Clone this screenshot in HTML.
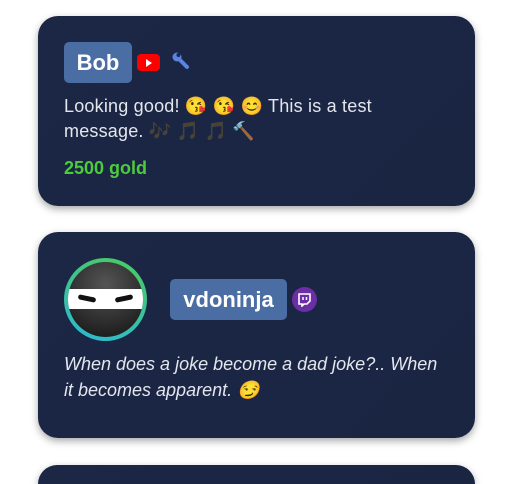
<!DOCTYPE html>
<html><head><style>
html,body{margin:0;background:#fff;width:507px;height:484px;overflow:hidden;font-family:"Liberation Sans",sans-serif;position:relative}
.card{position:absolute;left:38px;width:437px;background:linear-gradient(135deg,#1b2745,#1a2542);border-radius:20px;box-shadow:0 3px 8px rgba(0,0,0,.35)}
.badge{position:absolute;background:#4a6da3;color:#fff;font-weight:bold;font-size:22px;border-radius:5px;text-align:center}
.txt{position:absolute;color:#e4e6ee;font-size:18px;line-height:25px}
</style></head><body>
<div class="card" style="top:16px;height:190px">
 <div class="badge" style="left:26px;top:26px;width:68px;height:41px;line-height:41px">Bob</div>
 <div style="position:absolute;left:99px;top:38px;width:23px;height:17px;background:#f00;border-radius:4px"><div style="position:absolute;left:9px;top:4.5px;border-left:6px solid #fff;border-top:4px solid transparent;border-bottom:4px solid transparent"></div></div>
 <svg style="position:absolute;left:134px;top:36px" width="20" height="20" viewBox="0 0 20 20"><path d="M5 5 L15 15" stroke="#5b83e0" stroke-width="4" stroke-linecap="round"/><circle cx="5" cy="5" r="4.5" fill="#5b83e0"/><circle cx="6.5" cy="3" r="2" fill="#1b2745"/></svg>
 <div class="txt" style="left:26px;top:78px;width:330px;letter-spacing:0.2px">Looking good! 😘 😘 😊 This is a test message. <span style="filter:brightness(0.55) sepia(0.8)">🎶 🎵 🎵</span> 🔨</div>
 <div style="position:absolute;left:26px;top:142px;color:#4ccc3c;font-weight:bold;font-size:18px">2500 gold</div>
</div>
<div class="card" style="top:232px;height:206px">
 <div style="position:absolute;left:26px;top:26px;width:83px;height:83px;border-radius:50%;background:linear-gradient(20deg,#2ab8d8,#4ccc5c)"></div>
 <div style="position:absolute;left:30px;top:30px;width:75px;height:75px;border-radius:50%;background:radial-gradient(circle at 50% 30%,#555,#111);overflow:hidden">
  <div style="position:absolute;left:0;right:0;top:27px;height:20px;background:#fff"></div>
  <div style="position:absolute;left:10px;top:34px;width:18px;height:5px;background:#111;transform:rotate(12deg);border-radius:3px"></div>
  <div style="position:absolute;left:47px;top:34px;width:18px;height:5px;background:#111;transform:rotate(-12deg);border-radius:3px"></div>
 </div>
 <div class="badge" style="left:132px;top:47px;width:117px;height:41px;line-height:41px">vdoninja</div>
 <div style="position:absolute;left:254px;top:55px;width:25px;height:25px;border-radius:50%;background:#6b2fa5"><svg style="position:absolute;left:6px;top:6px" width="13" height="14" viewBox="0 0 13 14"><path d="M1 1 H12 V8 L9 11 H6 L4 13 V11 H1 Z" fill="none" stroke="#fff" stroke-width="1.6"/><path d="M5 4 V7 M8.5 4 V7" stroke="#fff" stroke-width="1.5"/></svg></div>
 <div class="txt" style="left:26px;top:119px;width:385px;font-style:italic;line-height:26px">When does a joke become a dad joke?.. When it becomes apparent. 😏</div>
</div>
<div class="card" style="top:465px;height:19px;border-radius:20px 20px 0 0"></div>
</body></html>
